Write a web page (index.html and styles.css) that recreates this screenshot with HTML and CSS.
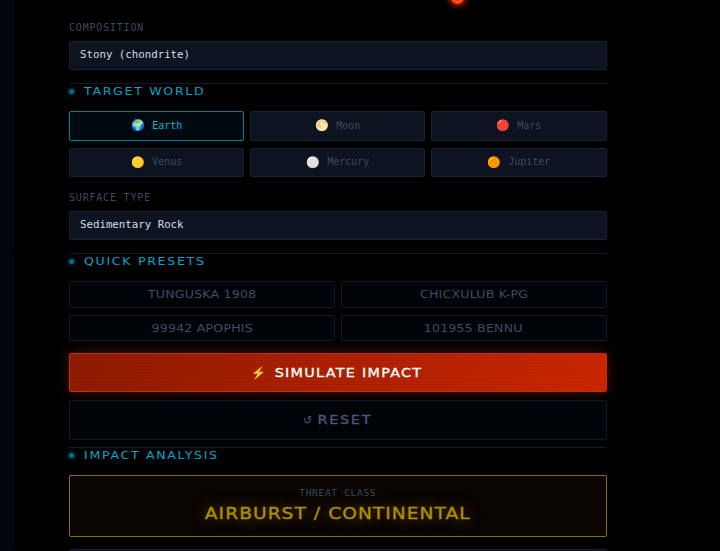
FILE: index.html
```html
<!DOCTYPE html>
<html lang="en">
<head>
<meta charset="utf-8">
<title>Impact Simulator</title>
<link rel="stylesheet" href="styles.css">
</head>
<body>
<div class="edge"></div>
<div class="meteor"></div>
<main class="panel">
  <div class="label first">COMPOSITION</div>
  <div class="select">Stony (chondrite)</div>
  <h2 class="section"><span class="dot"></span><span class="section-text">TARGET WORLD</span></h2>
  <div class="worlds">
    <button class="world active"><span class="emo">🌍</span>Earth</button>
    <button class="world"><span class="emo">🌕</span>Moon</button>
    <button class="world"><span class="emo">🔴</span>Mars</button>
    <button class="world"><span class="emo">🟡</span>Venus</button>
    <button class="world"><span class="emo">⚪</span>Mercury</button>
    <button class="world"><span class="emo">🟠</span>Jupiter</button>
  </div>
  <div class="label">SURFACE TYPE</div>
  <div class="select">Sedimentary Rock</div>
  <h2 class="section"><span class="dot"></span><span class="section-text">QUICK PRESETS</span></h2>
  <div class="presets">
    <button class="preset"><span class="wide">TUNGUSKA 1908</span></button>
    <button class="preset"><span class="wide">CHICXULUB K-PG</span></button>
    <button class="preset"><span class="wide">99942 APOPHIS</span></button>
    <button class="preset"><span class="wide">101955 BENNU</span></button>
  </div>
  <button class="simulate"><span class="bolt">⚡</span><span class="wide sim-text">SIMULATE IMPACT</span></button>
  <button class="reset"><span class="undo">↺</span><span class="wide reset-text">RESET</span></button>
  <h2 class="section tight"><span class="dot"></span><span class="section-text">IMPACT ANALYSIS</span></h2>
  <div class="threat">
    <div class="threat-label">THREAT CLASS</div>
    <div class="threat-value"><span class="wide">AIRBURST / CONTINENTAL</span></div>
  </div>
  <div class="next"></div>
</main>
</body>
</html>
```
FILE: styles.css
```css
* { box-sizing: border-box; }
html, body { margin: 0; height: 551px; overflow: hidden; background: #000; }
body { position: relative; font-family: "DejaVu Sans Mono", monospace; }
.edge { position: absolute; left: 0; top: 0; bottom: 0; width: 15px; background: linear-gradient(90deg, #00060c, #000509); }
.meteor { position: absolute; left: 451px; top: -9px; width: 13px; height: 13px; border-radius: 50%; background: #ff4a10; box-shadow: 0 0 6px 2px #c02000; }
.panel { width: 537.5px; margin-left: 69px; padding-top: 22px; }
.label { font-size: 10px; line-height: 11px; letter-spacing: .8px; color: #3c4a63; margin: 15px 0 8px; }
.label.first { margin-top: 0; }
.select { height: 29px; background: #0d1420; border: 1px solid #182236; border-radius: 2px; color: #d5dde8; font-size: 10.75px; line-height: 26px; padding-left: 10px; }
.section { margin: 13px 0 0; height: 28px; border-top: 1px solid #111a2a; display: flex; align-items: center; padding-bottom: 13px; font: 400 10.5px/13px "DejaVu Sans", sans-serif; letter-spacing: 1.39px; color: #00a5c8; }
.section-text { display: inline-block; transform: scaleX(1.2); transform-origin: left center; }
.section.tight { margin-top: 7px; }
.dot { width: 5px; height: 5px; border-radius: 50%; background: #006f88; box-shadow: 0 0 4px #006f88; margin-right: 10px; }
.worlds { display: grid; grid-template-columns: repeat(3, 1fr); gap: 7px 5.6px; }
.world { height: 29.5px; background: #0d1420; border: 1px solid #182236; border-radius: 2px; color: #3c4a63; font: 10px/1 "DejaVu Sans Mono", monospace; display: flex; align-items: center; justify-content: center; padding: 0; }
.world.active { background: #00090e; border-color: #007e96; color: #00b8dc; }
.emo { font-size: 11px; margin-right: 7px; }
.presets { display: grid; grid-template-columns: 1fr 1fr; gap: 7px 6px; }
.wide { display: inline-block; transform: scaleX(1.2); }
.preset { height: 26.5px; background: #000308; border: 1px solid #111a2c; border-radius: 2px; color: #3e4c66; font: 10.5px/1 "DejaVu Sans", sans-serif; letter-spacing: .15px; padding: 0; }
.simulate { display: block; width: 100%; height: 39px; margin-top: 12px; background: repeating-linear-gradient(0deg, rgba(0,0,0,.06) 0 1px, transparent 1px 3px), linear-gradient(90deg, #8f1b00, #cc2600); border: 1px solid #c23300; border-radius: 2px; color: #fff; font: 400 12px/1 "DejaVu Sans", sans-serif; letter-spacing: 1.05px; box-shadow: 0 0 14px rgba(200,50,0,.35); padding: 0; -webkit-text-stroke: .3px #fff; }
.sim-text { margin: 0 13.5px 0 12.5px; }
.bolt { font-family: "Noto Color Emoji", sans-serif; letter-spacing: 0; margin-right: 8.5px; font-size: 12px; -webkit-text-stroke: 0; }
.reset { display: block; width: 100%; height: 40px; margin-top: 8px; background: #000308; border: 1px solid #111a2c; border-radius: 2px; color: #4a5a75; font: 400 12px/1 "DejaVu Sans", sans-serif; letter-spacing: 1.43px; padding: 0; -webkit-text-stroke: .3px #4a5a75; }
.reset-text { margin: 0 4.5px; }
.undo { margin-right: 5.5px; font-size: 11px; letter-spacing: 0; -webkit-text-stroke: 0; }
.threat { height: 61.5px; background: #0a0500; border: 1px solid #8a7000; border-radius: 2px; text-align: center; padding-top: 11px; }
.threat-label { font-size: 9.5px; line-height: 11px; letter-spacing: .7px; color: #3c4a63; }
.threat-value { margin-top: 7px; font: 400 15.5px/18px "DejaVu Sans", sans-serif; letter-spacing: .88px; color: #b08e00; text-shadow: 0 0 12px rgba(180,140,0,.6); -webkit-text-stroke: .35px #b08e00; }
.next { height: 20px; margin-top: 12px; background: #0a1018; border: 1px solid #14233c; border-radius: 2px; }
```
